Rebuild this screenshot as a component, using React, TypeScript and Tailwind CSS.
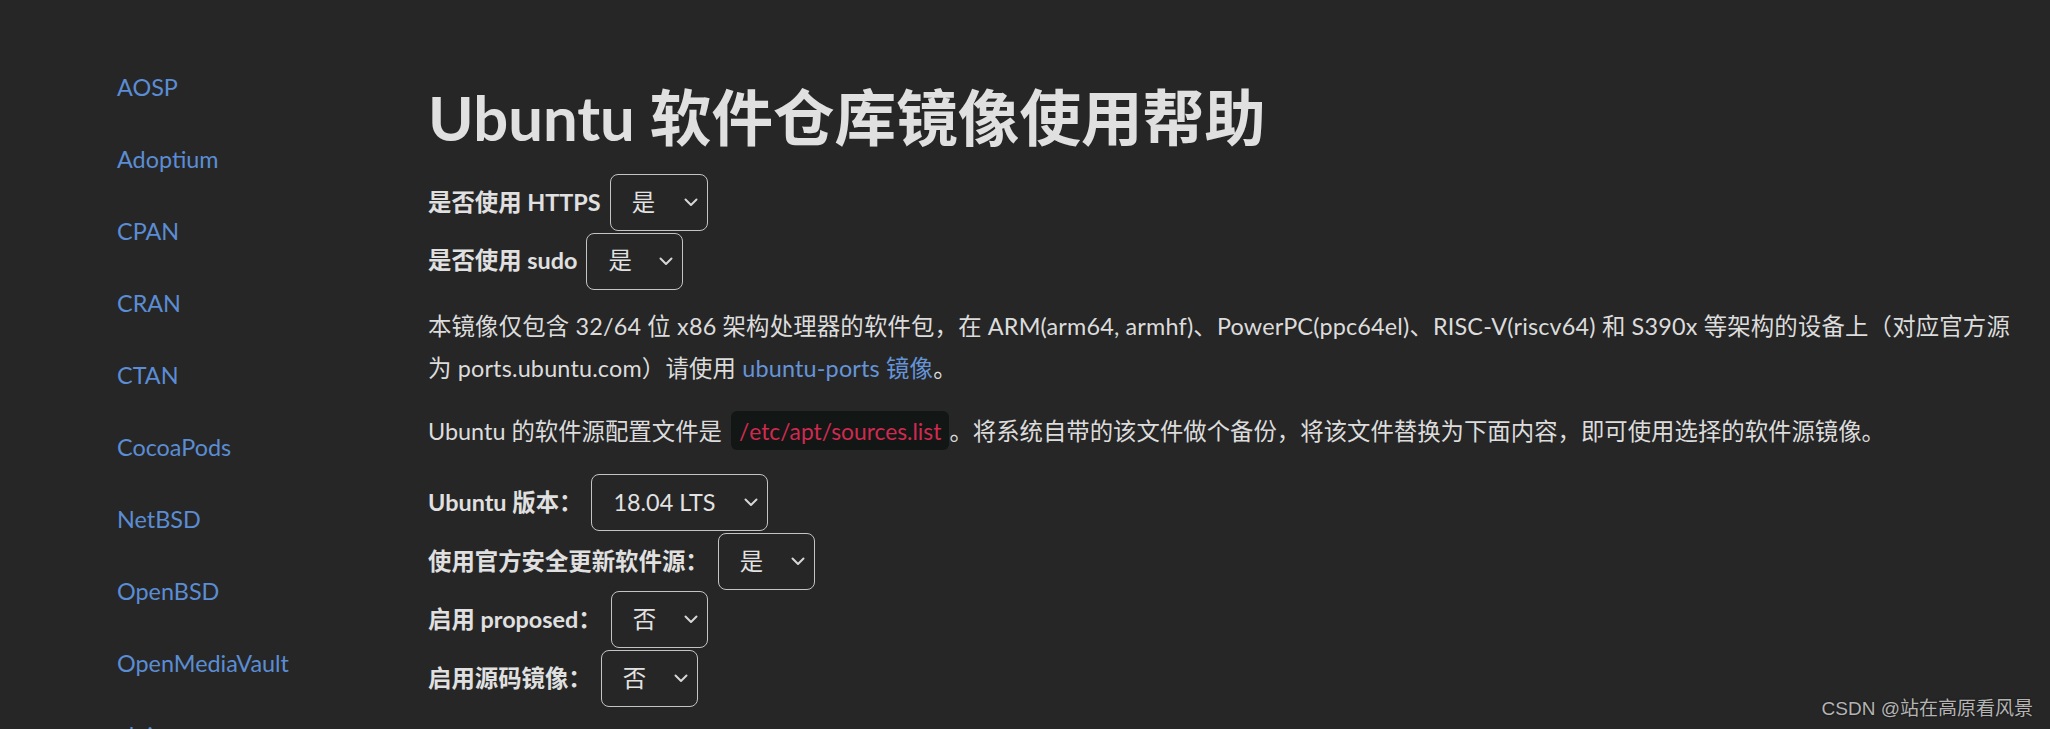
import React from "react";

const sidebar = [
  "AOSP",
  "Adoptium",
  "CPAN",
  "CRAN",
  "CTAN",
  "CocoaPods",
  "NetBSD",
  "OpenBSD",
  "OpenMediaVault",
  "alpine",
];

function Chevron() {
  return (
    <svg width="14" height="9" viewBox="0 0 14 9" className="shrink-0">
      <polyline
        points="1.5,1.5 7,7 12.5,1.5"
        fill="none"
        stroke="#d6d6d6"
        strokeWidth="2"
        strokeLinecap="round"
        strokeLinejoin="round"
      />
    </svg>
  );
}

function SelectRow({
  label,
  value,
  width,
}: {
  label: string;
  value: string;
  width: string;
}) {
  return (
    <div className="flex h-[58.7px] items-center">
      <span className="font-bold text-[#e0e0e0]">{label}</span>
      <div
        className={`ml-[9px] flex h-[57px] items-center justify-between rounded-[8px] border border-[#c4c4c4] pl-[21px] pr-[9px] text-[#e2e2e2] ${width}`}
      >
        <span>{value}</span>
        <Chevron />
      </div>
    </div>
  );
}

export default function App() {
  return (
    <div className="relative flex h-[729px] w-full overflow-hidden bg-[#262626] font-[Lato,'Noto_Sans_CJK_SC',sans-serif] text-[23.4px] text-[#dcdcdc]">
      <aside className="w-[428px] shrink-0 pl-[117px] pt-[51px]">
        {sidebar.map((s) => (
          <div key={s} className="h-[72px] leading-[72px] text-[#5b8dd4]">
            {s}
          </div>
        ))}
      </aside>

      <main className="w-[1600px] shrink-0 pt-[80px]">
        <h1 className="text-[61.6px] font-bold leading-[74px] text-[#e0e0e0]">
          Ubuntu 软件仓库镜像使用帮助
        </h1>

        <div className="mt-[19px]">
          <SelectRow label="是否使用 HTTPS" value="是" width="w-[98px]" />
          <SelectRow label="是否使用 sudo" value="是" width="w-[97px]" />
        </div>

        <p className="mt-[16px] max-w-[1596px] leading-[41.6px] tracking-[0.17px]">
          本镜像仅包含 32/64 位 x86 架构处理器的软件包，在 ARM(arm64, armhf)、PowerPC(ppc64el)、RISC-V(riscv64) 和 S390x 等架构的设备上（对应官方源为 ports.ubuntu.com）请使用{" "}
          <a className="text-[#6594d8]">ubuntu-ports 镜像</a>。
        </p>

        <p className="mt-[21px] leading-[41.6px]">
          Ubuntu 的软件源配置文件是{" "}
          <code className="ml-[3px] rounded-[6px] bg-[#121615] px-[8px] py-[5.5px] font-[Lato,'Noto_Sans_CJK_SC',sans-serif] text-[22.8px] text-[#cf2a4f]">
            /etc/apt/sources.list
          </code>
          。将系统自带的该文件做个备份，将该文件替换为下面内容，即可使用选择的软件源镜像。
        </p>

        <div className="mt-[21px]">
          <SelectRow label="Ubuntu 版本：" value="18.04 LTS" width="w-[177px]" />
          <SelectRow label="使用官方安全更新软件源：" value="是" width="w-[97px]" />
          <SelectRow label="启用 proposed：" value="否" width="w-[97px]" />
          <SelectRow label="启用源码镜像：" value="否" width="w-[97px]" />
        </div>
      </main>

      <div className="absolute bottom-[8px] right-[17px] font-['Liberation_Sans','Noto_Sans_CJK_SC',sans-serif] text-[19px] leading-[24px] text-[#b4b4b4] [text-shadow:0_0_2px_#111]">
        CSDN @站在高原看风景
      </div>
    </div>
  );
}
